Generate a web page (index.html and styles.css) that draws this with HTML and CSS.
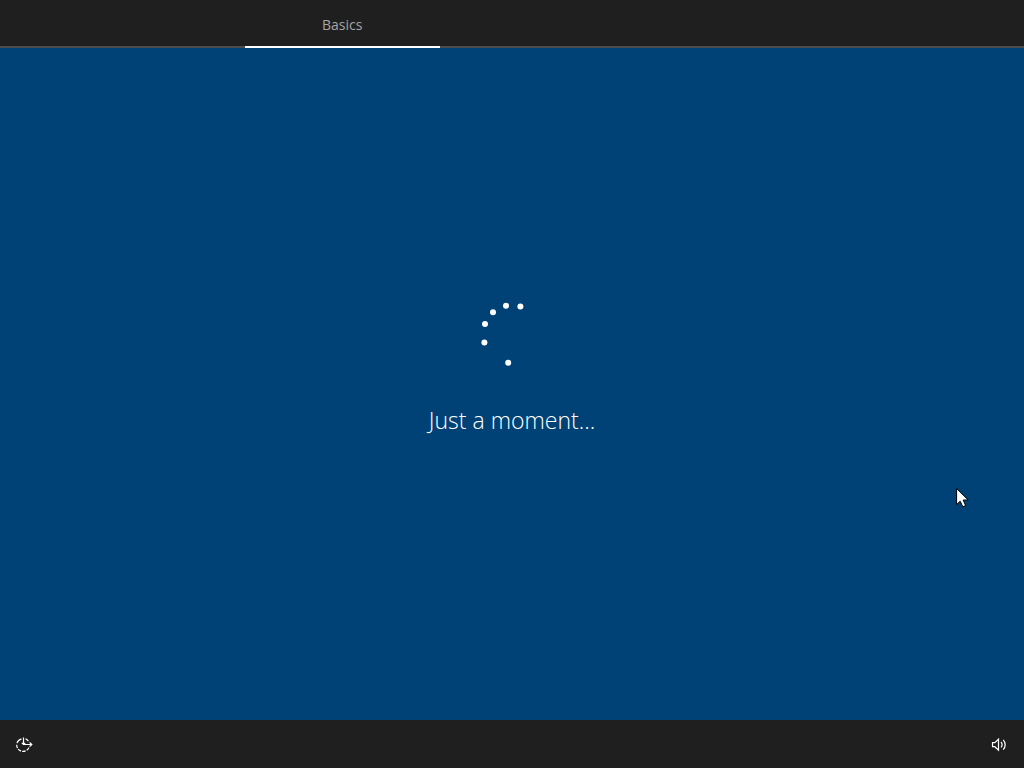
FILE: index.html
```html
<!DOCTYPE html>
<html lang="en">
<head>
  <meta charset="UTF-8">
  <meta name="viewport" content="width=device-width, initial-scale=1.0">
  <title>Setup</title>
  <link rel="stylesheet" href="styles.css">
</head>
<body>
  <header class="topbar">
    <div class="tab active">Basics</div>
  </header>

  <main class="content">
    <svg class="spinner" width="72" height="72" viewBox="0 0 72 72" aria-hidden="true">
      <circle cx="44.4" cy="8.4" r="3"/>
      <circle cx="30" cy="7.8" r="3"/>
      <circle cx="17" cy="14.2" r="3"/>
      <circle cx="9" cy="26" r="3"/>
      <circle cx="8.4" cy="44.6" r="3"/>
      <circle cx="32.2" cy="64.7" r="3"/>
    </svg>
    <p class="message">Just a moment...</p>
  </main>

  <footer class="bottombar">
    <button class="icon-btn" type="button" aria-label="Ease of access">
      <svg width="20" height="20" viewBox="0 0 20 20">
        <path d="M7.5 4.8A6.3 6.3 0 0 0 3 9.2"/>
        <path d="M2.7 10.8A6.4 6.4 0 0 0 15.3 12.6" stroke-dasharray="3.4 1.2"/>
        <path d="M11.5 4.8A6.4 6.4 0 0 1 14.4 7.2"/>
        <path d="M9.5 3.5V10.5H17.6M15.6 8.3L17.8 10.5L15.6 12.7M7.8 8.8L9.5 10.5L11.2 8.8"/>
      </svg>
    </button>
    <button class="icon-btn" type="button" aria-label="Volume">
      <svg width="20" height="20" viewBox="0 0 20 20">
        <path d="M2.5 8.7H4.8L8.5 5.2V16.2L4.8 12.7H2.5Z"/>
        <path d="M11 8A3.8 3.8 0 0 1 11 13.4"/>
        <path d="M13.2 5.8A7 7 0 0 1 13.2 15.6"/>
      </svg>
    </button>
  </footer>

  <svg class="cursor" width="16" height="22" viewBox="0 0 16 22" aria-hidden="true">
    <path d="M0.6 0.5V16.6L4.2 13.2L6.8 18.8L9.6 17.6L7.2 12H12.2Z"/>
  </svg>
</body>
</html>
```

FILE: styles.css
```css
* {
  box-sizing: border-box;
  margin: 0;
  padding: 0;
}

body {
  display: flex;
  flex-direction: column;
  min-height: 100vh;
  background-color: #004275;
  color: #fff;
  font-family: "Open Sans", "Noto Sans", sans-serif;
}

.topbar {
  display: flex;
  height: 48px;
  padding-left: 23.9%;
  background-color: #1f1f1f;
  box-shadow: inset 0 -2px #4c4c4c;
}

.tab {
  width: 25%;
  padding-top: 2px;
  font-size: 14px;
  line-height: 46px;
  text-align: center;
  color: #a6a6a6;
}

.tab.active {
  border-bottom: 2px solid #fff;
}

.content {
  flex: 1;
  display: flex;
  flex-direction: column;
  align-items: center;
  justify-content: center;
  padding-bottom: 34px;
}

.spinner {
  fill: #fff;
}

.message {
  margin-top: 34px;
  font-size: 23px;
  font-weight: 300;
  line-height: 32px;
}

.bottombar {
  display: flex;
  justify-content: space-between;
  height: 48px;
  background-color: #1f1f1f;
}

.icon-btn {
  display: flex;
  align-items: center;
  justify-content: center;
  width: 48px;
  background: none;
  border: none;
}

.icon-btn svg {
  fill: none;
  stroke: #fff;
  stroke-width: 1.2;
}

/* mouse pointer over the page */
.cursor {
  position: absolute;
  left: 956px;
  top: 488px;
  fill: #fff;
  stroke: #000;
  stroke-width: 1;
}
```
